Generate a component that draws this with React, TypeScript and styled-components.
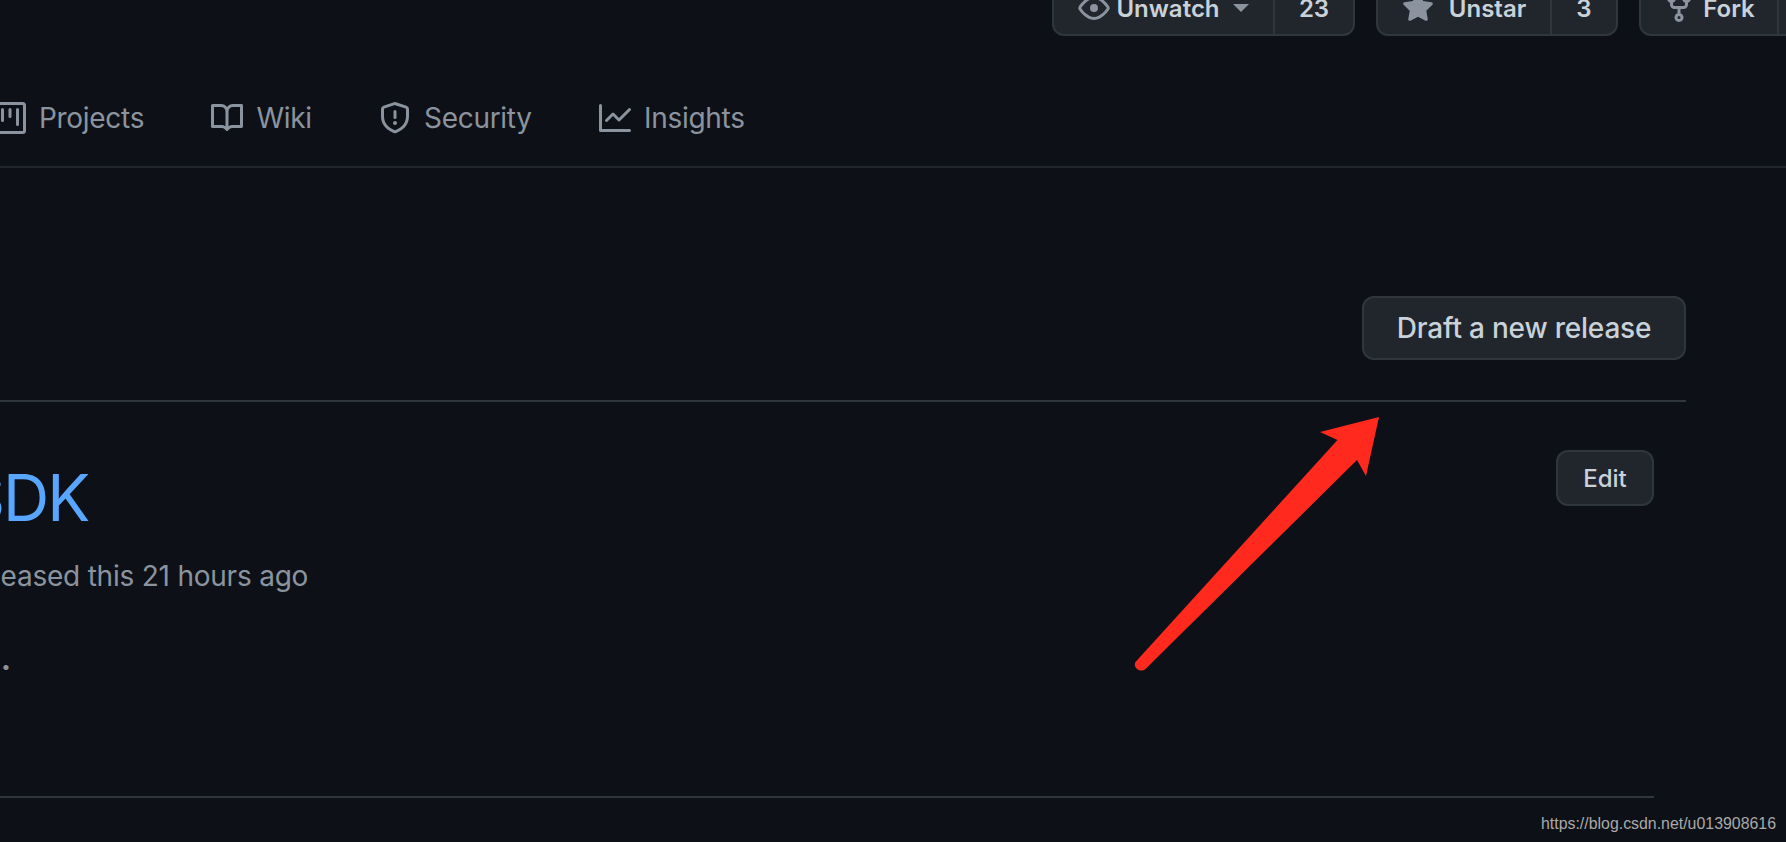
import styled, { createGlobalStyle } from 'styled-components';

const GlobalStyle = createGlobalStyle`
    html, body {
        margin: 0;
        padding: 0;
        background: #0d1117;
    }
`;

const icons = {
    eye: 'M1.679 7.932c.412-.621 1.242-1.75 2.366-2.717C5.175 4.242 6.527 3.5 8 3.5c1.473 0 2.824.742 3.955 1.715 1.124.967 1.954 2.096 2.366 2.717a.119.119 0 010 .136c-.412.621-1.242 1.75-2.366 2.717C10.825 11.758 9.473 12.5 8 12.5c-1.473 0-2.824-.742-3.955-1.715C2.92 9.818 2.09 8.69 1.679 8.068a.119.119 0 010-.136zM8 2c-1.981 0-3.67.992-4.933 2.078C1.797 5.169.88 6.423.43 7.1a1.619 1.619 0 000 1.798c.45.678 1.367 1.932 2.637 3.024C4.329 13.008 6.019 14 8 14c1.981 0 3.67-.992 4.933-2.078 1.27-1.091 2.187-2.345 2.637-3.023a1.619 1.619 0 000-1.798c-.45-.678-1.367-1.932-2.637-3.023C11.671 2.992 9.981 2 8 2zm0 8a2 2 0 100-4 2 2 0 000 4z',
    star: 'M8 .25a.75.75 0 01.673.418l1.882 3.815 4.21.612a.75.75 0 01.416 1.279l-3.046 2.97.719 4.192a.75.75 0 01-1.088.791L8 12.347l-3.766 1.98a.75.75 0 01-1.088-.79l.72-4.194L.818 6.374a.75.75 0 01.416-1.28l4.21-.611L7.327.668A.75.75 0 018 .25z',
    fork: 'M5 3.25a.75.75 0 11-1.5 0 .75.75 0 011.5 0zm0 2.122a2.25 2.25 0 10-1.5 0v.878A2.25 2.25 0 005.75 8.5h1.5v2.128a2.251 2.251 0 101.5 0V8.5h1.5a2.25 2.25 0 002.25-2.25v-.878a2.25 2.25 0 10-1.5 0v.878a.75.75 0 01-.75.75h-4.5A.75.75 0 015 6.25v-.878zm3.75 7.378a.75.75 0 11-1.5 0 .75.75 0 011.5 0zm3-8.75a.75.75 0 100-1.5.75.75 0 000 1.5z',
    project: 'M1.75 0A1.75 1.75 0 000 1.75v12.5C0 15.216.784 16 1.75 16h12.5A1.75 1.75 0 0016 14.25V1.75A1.75 1.75 0 0014.25 0H1.75zM1.5 1.75a.25.25 0 01.25-.25h12.5a.25.25 0 01.25.25v12.5a.25.25 0 01-.25.25H1.75a.25.25 0 01-.25-.25V1.75zM11.75 3a.75.75 0 00-.75.75v7.5a.75.75 0 001.5 0v-7.5a.75.75 0 00-.75-.75zm-8.25.75a.75.75 0 011.5 0v5.5a.75.75 0 01-1.5 0v-5.5zM8 3a.75.75 0 00-.75.75v3.5a.75.75 0 001.5 0v-3.5A.75.75 0 008 3z',
    book: 'M0 1.75A.75.75 0 01.75 1h4.253c1.227 0 2.317.59 3 1.501A3.744 3.744 0 0111.006 1h4.245a.75.75 0 01.75.75v10.5a.75.75 0 01-.75.75h-4.507a2.25 2.25 0 00-1.591.659l-.622.621a.75.75 0 01-1.06 0l-.622-.621A2.25 2.25 0 005.258 13H.75a.75.75 0 01-.75-.75V1.75zm8.755 3a2.25 2.25 0 012.25-2.25H14.5v9h-3.757c-.71 0-1.4.201-1.992.572l.004-7.322zm-1.504 7.324l.004-5.073-.002-2.253A2.25 2.25 0 005.003 2.5H1.5v9h3.757a3.75 3.75 0 011.994.574z',
    shield: 'M7.467.133a1.75 1.75 0 011.066 0l5.25 1.68A1.75 1.75 0 0115 3.48V7c0 1.566-.32 3.182-1.303 4.682-.983 1.498-2.585 2.813-5.032 3.855a1.7 1.7 0 01-1.33 0c-2.447-1.042-4.049-2.357-5.032-3.855C1.32 10.182 1 8.566 1 7V3.48a1.75 1.75 0 011.217-1.667l5.25-1.68zm.61 1.429a.25.25 0 00-.153 0l-5.25 1.68a.25.25 0 00-.174.238V7c0 1.358.275 2.666 1.057 3.86.784 1.194 2.121 2.34 4.366 3.297a.2.2 0 00.154 0c2.245-.956 3.582-2.104 4.366-3.298C13.225 9.666 13.5 8.36 13.5 7V3.48a.25.25 0 00-.174-.237l-5.25-1.68zM9 10.5a1 1 0 11-2 0 1 1 0 012 0zm-.25-5.75a.75.75 0 10-1.5 0v3a.75.75 0 001.5 0v-3z',
    graph: 'M1.5 1.75a.75.75 0 00-1.5 0v12.5c0 .414.336.75.75.75h14.5a.75.75 0 000-1.5H1.5V1.75zm14.28 2.53a.75.75 0 00-1.06-1.06L10 7.94 7.53 5.47a.75.75 0 00-1.06 0L3.22 8.72a.75.75 0 001.06 1.06L7 7.06l2.47 2.47a.75.75 0 001.06 0l5.25-5.25z',
};

const Octicon = ({ name, size = 32 }: { name: keyof typeof icons; size?: number }) => (
    <IconSvg width={size} height={size} viewBox="0 0 16 16">
        <path fillRule="evenodd" d={icons[name]} />
    </IconSvg>
);

const tabs: { icon: keyof typeof icons; label: string }[] = [
    { icon: 'project', label: 'Projects' },
    { icon: 'book', label: 'Wiki' },
    { icon: 'shield', label: 'Security' },
    { icon: 'graph', label: 'Insights' },
];

const App = () => {
    return (
        <Page>
            <GlobalStyle />
            <RepoActions>
                <ActionGroup>
                    <ActionMain $width={221} $gap={6}>
                        <Octicon name="eye" />
                        <ActionLabel>Unwatch</ActionLabel>
                        <Caret />
                    </ActionMain>
                    <ActionCount $width={78}>23</ActionCount>
                </ActionGroup>
                <ActionGroup>
                    <ActionMain $width={174} $gap={15}>
                        <Octicon name="star" />
                        <ActionLabel>Unstar</ActionLabel>
                    </ActionMain>
                    <ActionCount $width={64}>3</ActionCount>
                </ActionGroup>
                <ActionGroup>
                    <ActionMain $width={138} $gap={8}>
                        <Octicon name="fork" />
                        <ActionLabel>Fork</ActionLabel>
                    </ActionMain>
                    <ActionCount $width={64} />
                </ActionGroup>
            </RepoActions>

            <TabBar>
                {tabs.map((tab) => (
                    <Tab key={tab.label}>
                        <Octicon name={tab.icon} />
                        {tab.label}
                    </Tab>
                ))}
            </TabBar>

            <Main>
                <Toolbar>
                    <DraftButton>Draft a new release</DraftButton>
                </Toolbar>
                <Release>
                    <ReleaseInner>
                        <ReleaseHeader>
                            <ReleaseTitle>SDK</ReleaseTitle>
                            <EditButton>Edit</EditButton>
                        </ReleaseHeader>
                        <ReleaseMeta>released this 21 hours ago</ReleaseMeta>
                        <ReleaseBody>.</ReleaseBody>
                    </ReleaseInner>
                </Release>
            </Main>

            <Arrow width="260" height="270" viewBox="1130 410 260 270">
                <path d="M1379 417 L1320 432 L1337.5 440 L1135.5 662 Q1133.5 666 1137 669 Q1141.5 672 1145.5 669 L1357 460 L1366 476 Z" />
            </Arrow>
            <Watermark>https://blog.csdn.net/u013908616</Watermark>
        </Page>
    );
};

export default App;

// Styled Components
const Page = styled.div`
    position: relative;
    width: 1786px;
    height: 842px;
    overflow: hidden;
    background: #0d1117;
    font-family: Inter, 'Noto Sans', sans-serif;
    color: #c9d1d9;
`;

const IconSvg = styled.svg`
    fill: #8b949e;
    flex-shrink: 0;
`;

const RepoActions = styled.div`
    display: flex;
    align-items: flex-end;
    gap: 21px;
    height: 36px;
    padding-left: 1052px;
    width: 1100px;
`;

const ActionGroup = styled.div`
    display: flex;
    flex-shrink: 0;
    height: 64px;
    box-sizing: border-box;
    background: #21262d;
    border: 2px solid #30363d;
    border-radius: 12px;
`;

const ActionMain = styled.div<{ $width: number; $gap: number }>`
    display: flex;
    align-items: center;
    justify-content: center;
    gap: ${(props) => props.$gap}px;
    width: ${(props) => props.$width}px;
    box-sizing: border-box;
    border-right: 2px solid #30363d;
    padding-top: 8px;
`;

const ActionLabel = styled.span`
    font-size: 24px;
    font-weight: 600;
`;

const Caret = styled.span`
    width: 0;
    height: 0;
    margin-left: 7px;
    border-style: solid;
    border-width: 8px 8px 0;
    border-color: #8b949e transparent transparent;
`;

const ActionCount = styled.div<{ $width: number }>`
    display: flex;
    align-items: center;
    justify-content: center;
    width: ${(props) => props.$width}px;
    padding-top: 8px;
    font-size: 24px;
    font-weight: 600;
`;

const TabBar = styled.nav`
    display: flex;
    align-items: center;
    gap: 67.3px;
    height: 132px;
    box-sizing: border-box;
    padding: 34px 0 0;
    margin-left: -6px;
    border-bottom: 2px solid #21262d;
`;

const Tab = styled.a`
    display: flex;
    align-items: center;
    gap: 13px;
    font-size: 28px;
    letter-spacing: -0.3px;
    color: #8b949e;
`;

const Main = styled.main`
    padding-right: 100px;
`;

const Toolbar = styled.div`
    display: flex;
    justify-content: flex-end;
    padding: 128px 0 40px;
    border-bottom: 2px solid #30363d;
`;

const DraftButton = styled.button`
    width: 324px;
    height: 64px;
    box-sizing: border-box;
    background: #21262d;
    border: 2px solid #30363d;
    border-radius: 12px;
    font-family: inherit;
    font-size: 28px;
    font-weight: 500;
    letter-spacing: -0.2px;
    color: #c9d1d9;
`;

const Release = styled.section`
    padding-right: 32px;
`;

const ReleaseInner = styled.div`
    height: 396px;
    box-sizing: border-box;
    border-bottom: 2px solid #30363d;
`;

const ReleaseHeader = styled.div`
    display: flex;
    justify-content: space-between;
    align-items: flex-start;
    padding-top: 48px;
`;

const ReleaseTitle = styled.h1`
    margin: 8px 0 0 -36px;
    font-size: 64px;
    font-weight: 400;
    letter-spacing: -2px;
    line-height: 80px;
    color: #58a6ff;
`;

const EditButton = styled.button`
    width: 98px;
    height: 56px;
    box-sizing: border-box;
    background: #21262d;
    border: 2px solid #30363d;
    border-radius: 12px;
    font-family: inherit;
    font-size: 24px;
    font-weight: 500;
    color: #c9d1d9;
`;

const ReleaseMeta = styled.div`
    margin: 17px 0 0 -32px;
    font-size: 28px;
    letter-spacing: -0.22px;
    line-height: 42px;
    color: #8b949e;
`;

const ReleaseBody = styled.p`
    margin: 42px 0 0 1px;
    font-size: 28px;
    font-weight: 800;
    line-height: 42px;
    color: #8b949e;
`;

const Arrow = styled.svg`
    position: absolute;
    left: 1130px;
    top: 410px;
    fill: #ff2a1d;
`;

const Watermark = styled.div`
    position: absolute;
    right: 10px;
    bottom: 9px;
    font-family: 'Liberation Sans', Arial, sans-serif;
    font-size: 15.9px;
    color: #a9a9a9;
`;
